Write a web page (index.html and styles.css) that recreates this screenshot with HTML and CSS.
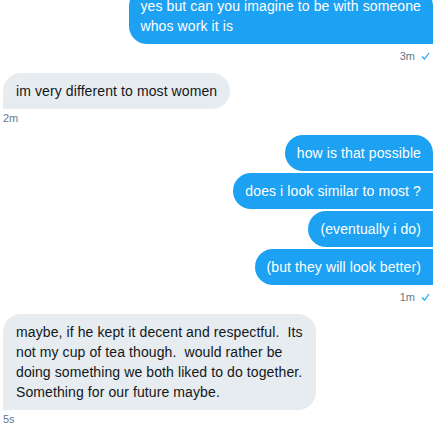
FILE: index.html
```html
<!DOCTYPE html>
<html>
<head>
<meta charset="utf-8">
<link rel="stylesheet" href="styles.css">
</head>
<body>
<div class="chat">
  <div class="group sent first-group">
    <div class="bubble">yes but can you imagine to be with someone<br>whos work it is</div>
    <div class="time">3m <svg class="check" width="9" height="8" viewBox="0 0 9 8"><polyline points="1,4.5 3.5,7 8,1" fill="none" stroke="#1da1f2" stroke-width="1.2"/></svg></div>
  </div>
  <div class="group received">
    <div class="bubble">im very different to most women</div>
    <div class="time">2m</div>
  </div>
  <div class="group sent">
    <div class="bubble">how is that possible</div>
    <div class="bubble">does i look similar to most ?</div>
    <div class="bubble">(eventually i do)</div>
    <div class="bubble">(but they will look better)</div>
    <div class="time">1m <svg class="check" width="9" height="8" viewBox="0 0 9 8"><polyline points="1,4.5 3.5,7 8,1" fill="none" stroke="#1da1f2" stroke-width="1.2"/></svg></div>
  </div>
  <div class="group received">
    <div class="bubble">maybe, if he kept it decent and respectful.&nbsp; Its<br>not my cup of tea though.&nbsp; would rather be<br>doing something we both liked to do together.<br>Something for our future maybe.</div>
    <div class="time">5s</div>
  </div>
</div>
</body>
</html>
```

FILE: styles.css
```css
html, body {
  margin: 0;
  padding: 0;
  background: #ffffff;
  overflow: hidden;
}
body {
  font-family: "Liberation Sans", Arial, sans-serif;
  font-size: 14px;
  color: #14171a;
}
.chat {
  padding: 0 4px 0 3px;
  display: flex;
  flex-direction: column;
  gap: 9px;
}
.group {
  display: flex;
  flex-direction: column;
  gap: 2px;
}
.first-group {
  margin-top: -12px;
}
.sent {
  align-items: flex-end;
}
.received {
  align-items: flex-start;
}
.bubble {
  padding: 8px 12px;
  line-height: 20px;
  letter-spacing: 0.1px;
  border-radius: 18px;
}
.sent .bubble {
  background: #1da1f2;
  color: #ffffff;
  border-radius: 18px 0 0 18px;
}
.sent .bubble:first-child {
  border-radius: 18px 18px 0 18px;
}
.received .bubble {
  background: #e6ecf0;
  color: #14171a;
  padding: 8px 13px;
  border-radius: 18px 18px 18px 0;
}
.time {
  font-size: 11px;
  line-height: 16px;
  color: #657786;
  display: flex;
  align-items: center;
  gap: 6px;
}
.sent .time {
  margin-top: 2px;
  padding-right: 3px;
}
.received .time {
  margin-top: -1px;
}
.check {
  display: block;
}
```
